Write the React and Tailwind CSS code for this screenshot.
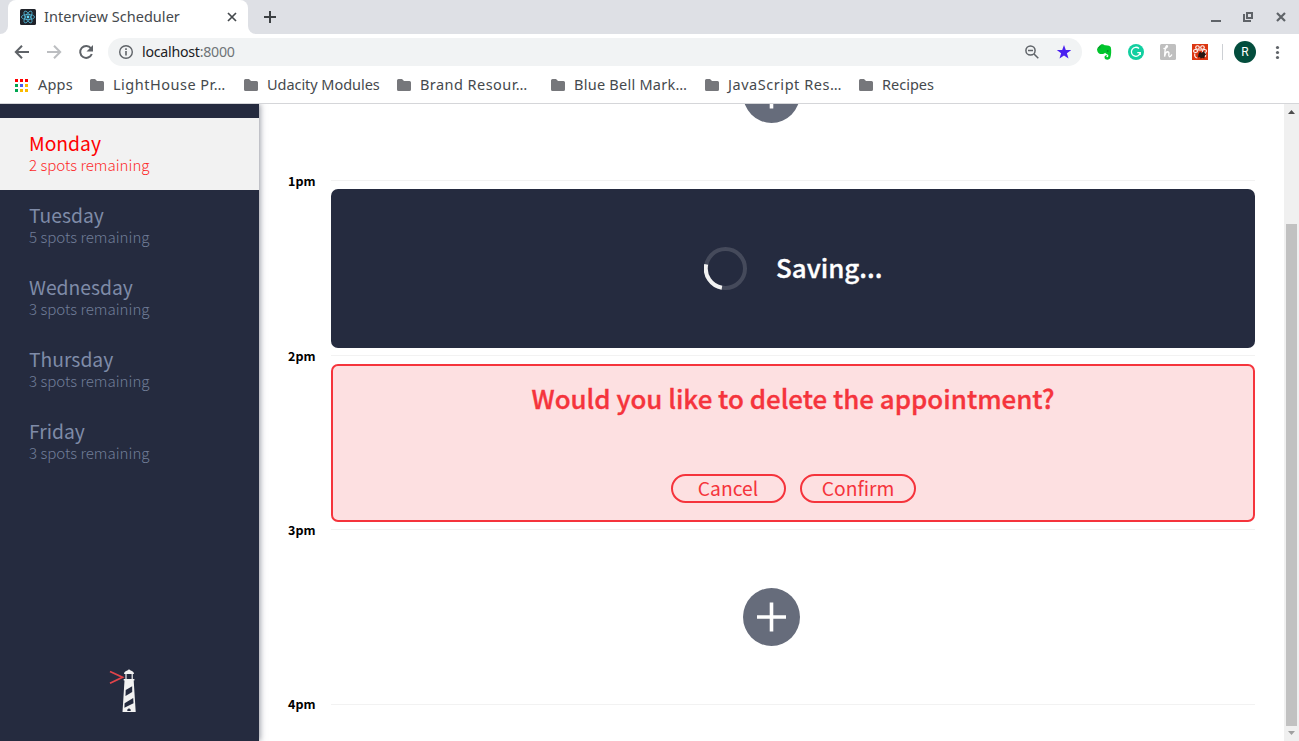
import React from "react";

const days = [
  { name: "Monday", spots: 2, selected: true },
  { name: "Tuesday", spots: 5 },
  { name: "Wednesday", spots: 3 },
  { name: "Thursday", spots: 3 },
  { name: "Friday", spots: 3 },
];

const sans = "font-['Noto_Sans_CJK_SC','Noto_Sans',sans-serif]";

function ReactIcon() {
  return (
    <svg className="h-4 w-4" viewBox="0 0 16 16">
      <rect width="16" height="16" rx="1.5" fill="#20232a" />
      <g fill="none" stroke="#53b8d8" strokeWidth="0.8">
        <ellipse cx="8" cy="8" rx="6.6" ry="2.6" />
        <ellipse cx="8" cy="8" rx="6.6" ry="2.6" transform="rotate(60 8 8)" />
        <ellipse cx="8" cy="8" rx="6.6" ry="2.6" transform="rotate(120 8 8)" />
      </g>
      <circle cx="8" cy="8" r="1.4" fill="#61dafb" />
    </svg>
  );
}

function TabStrip() {
  return (
    <div className="flex h-[34px] items-end bg-[#dee0e5]">
      <div className="h-[34px] w-2 bg-white">
        <div className="h-[34px] w-2 rounded-br-lg bg-[#dee0e5]" />
      </div>
      <div className="flex h-[34px] w-60 items-center rounded-t-lg bg-white pl-3">
        <ReactIcon />
        <span className="ml-2 w-[180px] whitespace-nowrap pb-0.5 text-[14.5px] leading-5 tracking-[0.03px] text-[#45494d]">Interview Scheduler</span>
        <svg className="h-4 w-4" viewBox="0 0 16 16" stroke="#45494d" strokeWidth="1.7">
          <path d="M4 4l8 8M12 4l-8 8" />
        </svg>
      </div>
      <div className="h-[34px] w-2 bg-white">
        <div className="h-[34px] w-2 rounded-bl-lg bg-[#dee0e5]" />
      </div>
      <svg className="ml-1.5 h-[34px] w-4" viewBox="0 0 16 34" stroke="#3c4043" strokeWidth="2">
        <path d="M2 17h12M8 11v12" />
      </svg>
      <svg className="ml-auto h-[34px] w-[99px]" viewBox="1200 0 99 34" fill="none" stroke="#5f6368">
        <path d="M1211 21h10" strokeWidth="2" />
        <path d="M1247 13h5v5h-5zM1244 14v7h7" strokeWidth="2" />
        <path d="M1277 13l8 8M1285 13l-8 8" strokeWidth="2.2" />
      </svg>
    </div>
  );
}

function Toolbar() {
  return (
    <div className="flex h-9 items-center bg-white">
      <svg className="h-9 w-[108px]" viewBox="0 34 108 36" fill="none" strokeWidth="2">
        <path d="M29 52H16.5M22 45.7L15.8 52l6.2 6.3" stroke="#5f6368" />
        <path d="M47 52h12.500M54 45.700L60.200 52l-6.200 6.300" stroke="#bcbec1" />
        <path d="M91 48.300A6 6 0 1 0 91.800 54" stroke="#5f6368" />
        <path d="M93 45v6.500h-6.500z" fill="#5f6368" />
      </svg>
      <div className="flex h-7 w-[974px] items-center rounded-full bg-[#f1f3f4] pl-[11px]">
        <svg className="h-[14px] w-[14px]" viewBox="0 0 14 14" fill="none" stroke="#5f6368">
          <circle cx="7" cy="7" r="6.300" strokeWidth="1.400" />
          <path d="M7 6v4.500M7 3.300v1.700" strokeWidth="1.600" />
        </svg>
        <span className="ml-[9px] text-[14.200px] leading-5 tracking-[-0.250px] text-[#202124]">
          localhost<span className="text-[#6f7377]">:8000</span>
        </span>
        <svg className="ml-auto mr-[11px] h-7 w-12" viewBox="1023 38 48 28" fill="none">
          <circle cx="1030.500" cy="50.500" r="4.600" stroke="#5f6368" strokeWidth="1.500" />
          <path d="M1034 54l4.300 4.300M1028 50.500h5" stroke="#5f6368" strokeWidth="1.500" />
          <path d="M1064 45l1.800 5h5.400l-4.300 3.300 1.600 5.300-4.500-3.200-4.500 3.200 1.600-5.300-4.300-3.300h5.400z" fill="#4a20f0" />
        </svg>
      </div>
      <svg className="h-9 w-[217px]" viewBox="1082 34 217 36" fill="none">
        <path d="M1097 49l4-4.500c1-.8 3 .1 3.800.8 3-.2 5.500.7 6 2 .8 3.500.4 8-.6 11-1 2-5.500 2-5.700-.8 0-2 1.700-2.600 3-1.900-1 0-1.300.8-.9 1.500 1 .8 2.200-.4 1.600-2-.6-1-2.700-1-3-2.400-1 1.500-4.500 1.700-6.200.7-1.500-1-1.800-2.600-2-4.400z" fill="#00c52c" />
        <path d="M1097.300 48.200l3.200-3.500v3.500z" fill="#079d2c" />
        <ellipse cx="1107.700" cy="51" rx=".9" ry=".7" fill="#08752a" />
        <circle cx="1136" cy="52" r="8" fill="#12cfa0" />
        <path d="M1139 48.500a4.500 4.500 0 1 0 1.300 4.200h-3M1140.300 52.700v2.300" stroke="white" strokeWidth="1.300" />
        <rect x="1160" y="44" width="16" height="16" rx="1.500" fill="#bfbfbf" />
        <path d="M1164 48.500c3 .2 4.600-3 2.500-2.700-1.500.6-1.600 7-1.900 10.900.5-3 1.500-5 3.200-5 2.500.2-.2 4.500 1.600 5 .9 0 1.700-.7 2.200-1.700" stroke="white" strokeWidth="1.400" strokeLinecap="round" />
        <rect x="1192" y="44" width="16" height="16" fill="#dc3510" />
        <g stroke="white" strokeWidth="1.100">
          <circle cx="1197.500" cy="47.500" r="1.800" /><circle cx="1202.500" cy="47.500" r="1.800" />
          <ellipse cx="1195.500" cy="51" rx="2" ry="1.500" /><ellipse cx="1204.500" cy="51" rx="2" ry="1.500" />
          <path d="M1195 53.500c-1 2 .2 4.500 2.300 4.500M1205 53.500c1 1 .7 2.500 0 3.500M1198 50h4" />
        </g>
        <path d="M1198.500 54l1.500-2.500 1.700 1.500 2-2 1.500 2.500 1 1-1.500 1.200-.5 2.800-2-.7-1.500 1-.7-1.800-2 .4z" fill="#271611" />
        <path d="M1222.500 44v16" stroke="#cdd0d4" />
        <circle cx="1245" cy="52" r="11" fill="#034d3d" />
        <text x="1245" y="56.200" textAnchor="middle" className="fill-white font-['Roboto',sans-serif] text-[12px]">R</text>
        <g fill="#5f6368"><circle cx="1277.500" cy="47.500" r="1.600" /><circle cx="1277.500" cy="52.500" r="1.600" /><circle cx="1277.500" cy="57.500" r="1.600" /></g>
      </svg>
    </div>
  );
}

function Bookmark({ label, width, truncated, tracking }) {
  return (
    <div className={"flex shrink-0 items-center " + width}>
      <svg className="h-3 w-[14px]" viewBox="0 0 14 12">
        <path d="M1.500 0H5l2 2h5.500A1.500 1.500 0 0 1 14 3.500v7a1.500 1.500 0 0 1-1.500 1.500h-11A1.500 1.500 0 0 1 0 10.500v-9A1.500 1.500 0 0 1 1.500 0z" fill="#76777b" />
      </svg>
      <span className={"ml-[9px] h-[22px] whitespace-nowrap text-[14.500px] leading-5 text-[#45494d] " + (tracking || "")}>
        {label}{truncated && "…"}
      </span>
    </div>
  );
}

function BookmarksBar() {
  return (
    <div className="flex h-[34px] items-center border-b border-[#d5d6d9] bg-white pb-[3px] pl-[15px]">
      <svg className="h-[13px] w-[13px]" viewBox="0 0 13 13">
        <path d="M0 0h3v3H0zM5 0h3v3H5zM10 0h3v3h-3z" fill="#f00" />
        <path d="M0 5h3v3H0zM0 10h3v3H0z" fill="#00a651" />
        <path d="M5 5h3v3H5z" fill="#4a5cf0" />
        <path d="M10 5h3v3h-3zM5 10h3v3H5zM10 10h3v3h-3z" fill="#fbba00" />
      </svg>
      <span className="ml-2.5 w-[52px] pb-0.5 text-[14.500px] leading-5 tracking-[0.2px] text-[#45494d]">Apps</span>
      <Bookmark label="LightHouse Pr" truncated width="w-[154px]" tracking="tracking-[0.5px]" />
      <Bookmark label="Udacity Modules" width="w-[153px]" tracking="tracking-[-0.05px]" />
      <Bookmark label="Brand Resour" truncated width="w-[154px]" tracking="tracking-[0.45px]" />
      <Bookmark label="Blue Bell Mark" truncated width="w-[154px]" tracking="tracking-[0.25px]" />
      <Bookmark label="JavaScript Res" truncated width="w-[154px]" tracking="tracking-[0.55px]" />
      <Bookmark label="Recipes" width="w-[100px]" />
    </div>
  );
}

function Sidebar() {
  return (
    <aside className="z-10 flex w-[259px] shrink-0 flex-col bg-[#252b3f] pt-[14px] shadow-[1px_0_6px_rgba(36,42,62,0.5)]">
      <ul>
        {days.map((d) => (
          <li key={d.name} className={"flex h-[72px] flex-col pl-[29px] pt-[13px] " + (d.selected ? "bg-[#f2f2f2] text-[#ff0000]" : "text-[#7f8ba8]")}>
            <span className="text-[19.300px] font-normal leading-6">{d.name}</span>
            <span className="text-[15.100px] font-light leading-[18px] opacity-85">{d.spots} spots remaining</span>
          </li>
        ))}
      </ul>
      <svg className="mb-7 ml-[108px] mt-auto h-[46px] w-[30px]" viewBox="108 667 30 46" fill="none">
        <path d="M110 671.500l12.500 5.700-12.500 6" stroke="#e2444a" strokeWidth="1.800" />
        <path d="M124 674c0-2.200 2-3.200 4.300-4l.7-1 .7 1c2.300.8 4.300 1.800 4.300 4z" fill="#f2f2f2" />
        <path d="M126 673h6.200v7H126z" stroke="#f2f2f2" strokeWidth="1.200" />
        <path d="M123.700 679h10.700v1.500h-.7l2 31.500h-13.200l2-31.500h-.8z" fill="#f2f2f2" />
        <path d="M125.700 690l6.500-3.700v5.600l-6.700 4.200z" fill="#252b3f" />
        <path d="M124.600 703.300l8.600-5.300.3 5.200-9.100 4.600z" fill="#252b3f" />
        <path d="M127.300 711v-1.500l1.700-1.300 1.700 1.300v1.500z" fill="#252b3f" />
      </svg>
    </aside>
  );
}

function TimeHeader({ time, lift }) {
  return (
    <div className="flex h-px items-center">
      <h4 className={"w-[43px] shrink-0 text-[12.500px] font-bold leading-4 text-black " + (lift || "")}>{time}</h4>
      <div className="h-px flex-1 bg-[#f2f2f2]" />
    </div>
  );
}

function AddButton({ offset }) {
  return (
    <svg className={"ml-[455px] block h-[58px] w-[57px] shrink-0 " + offset} viewBox="0 0 57 58">
      <ellipse cx="28.500" cy="29" rx="28.500" ry="29" fill="#666c7b" />
      <path d="M14 29h29M28.500 14.500v29" stroke="white" strokeWidth="3.600" />
    </svg>
  );
}

function Schedule() {
  return (
    <main className="h-[637px] min-w-0 flex-1 overflow-hidden pl-[29px] pr-[29px]">
      <div className="flex h-[76px]"><AddButton offset="-mt-[39px]" /></div>
      <TimeHeader time="1pm" />
      <div className="flex h-[174px] pl-[43px] pt-2">
        <div className="flex h-[159px] flex-1 items-center rounded-[7px] bg-[#252b3f] pl-[373px]">
          <svg className="h-[43px] w-[43px]" viewBox="0 0 43 43" fill="none" strokeWidth="4">
            <circle cx="21.500" cy="21.500" r="19.500" stroke="#454a5b" />
            <path d="M2.200 17.400A19.500 19.500 0 0 0 17.900 40.700" stroke="#f2f2f2" />
          </svg>
          <span className="ml-[29px] pb-[3px] text-[25.900px] font-medium leading-9 text-white [-webkit-text-stroke:0.35px_white]">Saving...</span>
        </div>
      </div>
      <TimeHeader time="2pm" />
      <div className="flex h-[173px] pl-[43px] pt-2">
        <div className="flex h-[158px] flex-1 flex-col items-center justify-between rounded-[7px] border-2 border-[#f5343c] bg-[#fde0e1] pb-[17px] pt-[14px] text-[#f5343c]">
          <h1 className="whitespace-nowrap text-[25.900px] font-medium leading-9 [-webkit-text-stroke:0.35px_#f5343c]">Would you like to delete the appointment?</h1>
          <div className="flex gap-3.5">
            <button className="h-[29px] w-[115px] rounded-full border-2 border-[#f5343c] pb-px text-[19.300px] font-normal leading-[24px]">Cancel</button>
            <button className="h-[29px] w-[116px] rounded-full border-2 border-[#f5343c] pb-px pl-px text-[19.300px] font-normal leading-[24px]">Confirm</button>
          </div>
        </div>
      </div>
      <TimeHeader time="3pm" />
      <div className="flex h-[174px]"><AddButton offset="mt-[58px]" /></div>
      <TimeHeader time="4pm" lift="pb-0.5" />
    </main>
  );
}

function Scrollbar() {
  return (
    <div className="flex w-[15px] flex-col items-center bg-[#f0f0f0]">
      <svg className="h-[15px] w-[15px]" viewBox="0 0 15 15"><path d="M4 10l3.500-4 3.500 4z" fill="#4d4d4d" /></svg>
      <div className="mt-[105px] h-[502px] w-[11px] bg-[#c1c1c1]" />
      <svg className="h-[15px] w-[15px]" viewBox="0 0 15 15"><path d="M4 5l3.500 4 3.500-4z" fill="#a0a0a0" /></svg>
    </div>
  );
}

export default function App() {
  return (
    <div className="h-[741px] w-[1299px] overflow-hidden bg-white">
      <header className="font-['Noto_Sans',sans-serif]">
        <TabStrip />
        <Toolbar />
        <BookmarksBar />
      </header>
      <div className={"flex h-[637px] overflow-hidden " + sans}>
        <Sidebar />
        <Schedule />
        <Scrollbar />
      </div>
    </div>
  );
}
